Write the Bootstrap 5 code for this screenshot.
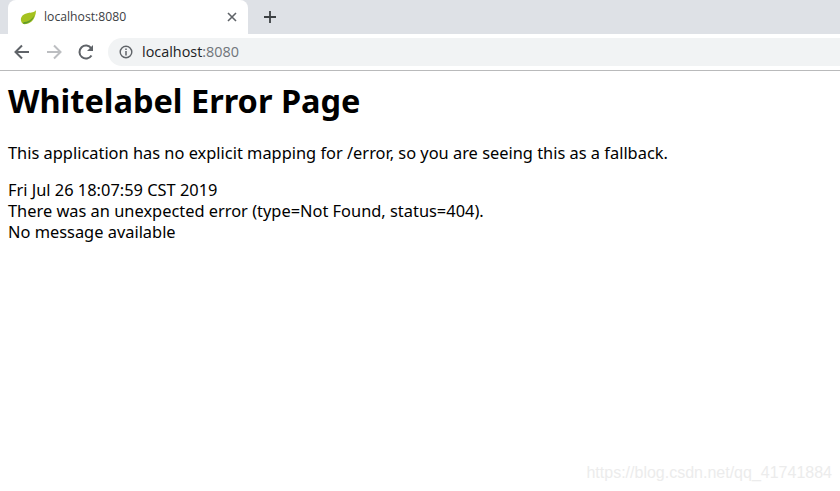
<!DOCTYPE html>
<html lang="en">
<head>
  <meta charset="UTF-8">
  <title>localhost:8080</title>
  <link href="https://cdn.jsdelivr.net/npm/bootstrap@5.3.0/dist/css/bootstrap.min.css" rel="stylesheet">
  <style>
    html, body { height: 100%; overflow: hidden; }
    body { font-family: "Noto Sans", "Open Sans", sans-serif; color: #000; background: #fff; position: relative; }
    .tab-strip { height: 34px; background: #dee1e6; padding-left: 8px; }
    .browser-tab { width: 240px; height: 34px; background: #fff; border-radius: 8px 8px 0 0; padding: 0 11px 0 12px; font-size: 12.2px; color: #3c4043; font-family: "Open Sans", sans-serif; }
    .fav-ico { margin-right: 7px; }
    .new-tab { margin-left: 15px; }
    .tool-bar { height: 37px; background: #fff; border-bottom: 1px solid #b9babb; padding-bottom: 1px; }
    .nav-ico { width: 20px; height: 20px; margin-left: 12px; }
    .nav-ico + .nav-ico { margin-left: 12px; }
    .omni-box { height: 28px; flex: 1; margin-left: 12px; background: #f1f3f4; border-radius: 14px 0 0 14px; padding-left: 11px; font-size: 14.4px; color: #202124; font-family: "Open Sans", sans-serif; }
    .omni-ico { margin-right: 9px; }
    .omni-box .port { color: #70757a; }
    .error-page { padding: 8px; }
    .error-page h1 { font-size: 32.5px; font-weight: 700; line-height: 44px; margin: 0 0 19px; }
    .error-page p { font-size: 16.4px; line-height: 21px; margin: 0 0 16px; }
    .watermark { position: absolute; right: 8px; bottom: 6px; font-family: "Liberation Sans", sans-serif; font-size: 16px; color: #ececec; }
  </style>
</head>
<body>
  <div class="tab-strip d-flex align-items-center">
    <div class="browser-tab d-flex align-items-center">
      <svg width="17" height="16" viewBox="0 0 18 16" class="fav-ico flex-shrink-0">
        <path d="M17 .5C15 3.500 12 3 8.500 3.700C3.500 4.700 .5 7.500 1 11.500C1.200 13 2 14.800 3.500 15.500C9 16 16.500 13 17 .5Z" fill="#a5c21f"/>
        <path d="M3.500 13.500C8 13.500 12.500 11 15 6.500C14 11.500 9 15.500 3.500 15.500Z" fill="#5f9a2c"/>
      </svg>
      <span class="flex-grow-1">localhost:8080</span>
      <svg width="10" height="10" viewBox="0 0 10 10"><path d="M1 1L9 9M9 1L1 9" stroke="#5f6368" stroke-width="1.600"/></svg>
    </div>
    <svg class="new-tab" width="14" height="14" viewBox="0 0 14 14"><path d="M7 1V13M1 7H13" stroke="#3c4043" stroke-width="1.800"/></svg>
  </div>
  <div class="tool-bar d-flex align-items-center">
    <svg class="nav-ico" viewBox="0 0 20 20"><path d="M17 10H4M10 3.500L3.500 10L10 16.500" fill="none" stroke="#5f6368" stroke-width="2"/></svg>
    <svg class="nav-ico" viewBox="0 0 20 20"><path d="M3 10H16M10 3.500L16.500 10L10 16.500" fill="none" stroke="#bcbec1" stroke-width="2"/></svg>
    <svg class="nav-ico" viewBox="0 0 20 20"><path d="M15.500 13.500A6.500 6.500 0 1 1 15.300 6.300" fill="none" stroke="#5f6368" stroke-width="2"/><path d="M17 3V9H11Z" fill="#5f6368"/></svg>
    <div class="omni-box d-flex align-items-center">
      <svg width="14" height="14" viewBox="0 0 14 14" class="omni-ico flex-shrink-0"><circle cx="7" cy="7" r="5.800" fill="none" stroke="#5f6368" stroke-width="1.400"/><path d="M7 6V10.500M7 3.500V5" stroke="#5f6368" stroke-width="1.500"/></svg>
      <span>localhost<span class="port">:8080</span></span>
    </div>
  </div>
  <main class="error-page">
    <h1>Whitelabel Error Page</h1>
    <p>This application has no explicit mapping for /error, so you are seeing this as a fallback.</p>
    <div>
      <p class="mb-0">Fri Jul 26 18:07:59 CST 2019</p>
      <p class="mb-0">There was an unexpected error (type=Not Found, status=404).</p>
      <p class="mb-0">No message available</p>
    </div>
  </main>
  <div class="watermark">https://blog.csdn.net/qq_41741884</div>
</body>
</html>
